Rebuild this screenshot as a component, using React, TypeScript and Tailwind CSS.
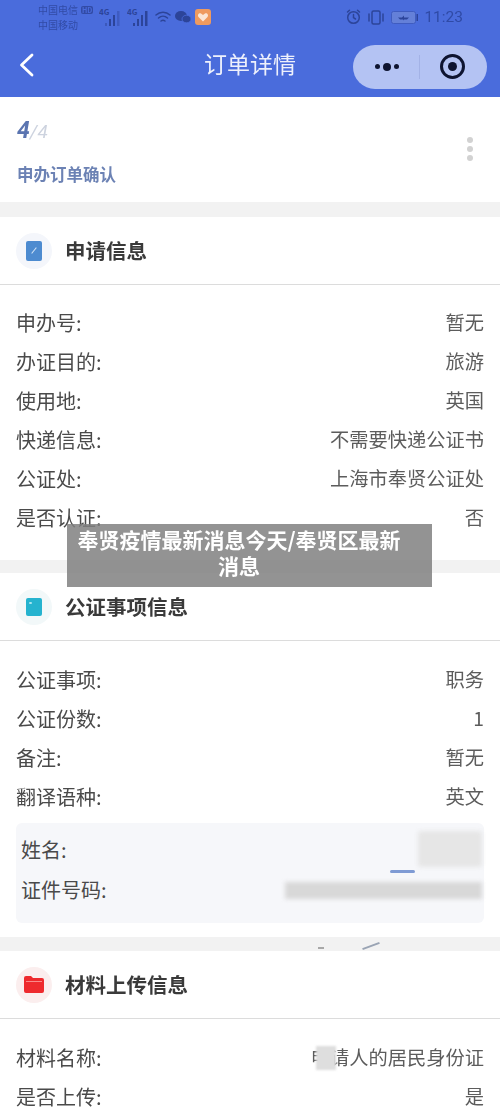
const cjk = "font-['Noto_Sans_CJK_SC','Noto_Sans',sans-serif]";

type RowProps = {
  label: string;
  value: string;
};

const Row = ({ label, value }: RowProps) => (
  <div className="flex h-[39px] items-center justify-between pl-4 pr-[16px] text-[20px] leading-[39px] text-[#4a4a4a]">
    <span>{label}</span>
    <span className="text-[19.25px] text-[#5c5c5c]">{value}</span>
  </div>
);

type HeaderProps = {
  title: string;
  halo: string;
  children: React.ReactNode;
};

const SectionHeader = ({ title, halo, children }: HeaderProps) => (
  <div className="flex h-[68px] items-center gap-[13px] border-b border-[#dcdcdc] pl-[16px]">
    <div className={`flex h-[36px] w-[36px] items-center justify-center rounded-full ${halo}`}>
      {children}
    </div>
    <span className="text-[20.5px] font-bold text-[#3a3a3a]">{title}</span>
  </div>
);

const Signal = ({ dim }: { dim?: boolean }) => (
  <svg width="24" height="22" viewBox="0 0 24 22" fill="#2c4499">
    <text x="0" y="9" fontSize="8" fontWeight="700">4G</text>
    <rect x="6" y="17" width="2" height="3" opacity={dim ? 0.5 : 1} />
    <rect x="10" y="13" width="2" height="7" />
    <rect x="14" y="9" width="2" height="11" />
    <rect x="18" y="5" width="2.500" height="15" opacity={dim ? 0.4 : 1} />
  </svg>
);

const StatusBar = () => (
  <div className="flex h-[36px] items-center pb-[2px] pl-[38px] pr-[37px] text-[#2c4499]">
    <div className="flex flex-col text-[10px] leading-[15px] opacity-80">
      <span className="flex items-center gap-[3px]">
        中国电信
        <span className="rounded-[2px] bg-[#2c4499] px-[1px] text-[7px] font-bold leading-[8px] text-[#4a6cdc]">HD</span>
      </span>
      <span>中国移动</span>
    </div>
    <div className="ml-[6px] flex items-center gap-[4px]">
      <Signal dim />
      <Signal />
      <svg width="16" height="14" viewBox="0 0 16 14" fill="none" stroke="#2c4499" strokeWidth="1.5" strokeLinecap="round">
        <path d="M1 5c4-3.6 10-3.6 14 0" />
        <path d="M3.5 8c2.6-2.2 6.400-2.200 9 0" />
        <path d="M6 11c1.200-.9 2.800-.9 4 0" />
      </svg>
      <svg width="16" height="14" viewBox="0 0 16 14" fill="#2c4499">
        <ellipse cx="6" cy="6" rx="6" ry="5" />
        <ellipse cx="11.500" cy="9" rx="4.500" ry="3.800" stroke="#4a6cdc" strokeWidth="0.8" />
      </svg>
      <svg width="16" height="16" viewBox="0 0 16 16">
        <rect width="16" height="16" rx="3" fill="#ef9a5f" />
        <path d="M8 12.500 3.500 8c-1.500-2 .5-4.500 2.500-3.500L8 6l2-1.500c2-1 4 1.500 2.500 3.500z" fill="#fbe6d6" />
      </svg>
    </div>
    <div className="ml-auto flex items-center gap-[6px]">
      <svg width="15" height="16" viewBox="0 0 15 16" fill="none" stroke="#2c4499" strokeWidth="1.500" strokeLinecap="round">
        <circle cx="7.500" cy="8.500" r="5.800" />
        <path d="M7.500 5.500v3.200l2 1.300M1.500 3 3.500 1.200M13.500 3l-2-1.800" />
      </svg>
      <svg width="18" height="15" viewBox="0 0 18 15" fill="none" stroke="#2c4499" strokeWidth="1.500" strokeLinecap="round">
        <rect x="5" y="1" width="8" height="13" rx="1.500" />
        <path d="M2 4v7M16 4v7" />
      </svg>
      <svg width="27" height="13" viewBox="0 0 27 13">
        <rect x="0.500" y="0.500" width="24" height="12" rx="2" fill="#6480d8" stroke="#3f5cc0" />
        <rect x="25.500" y="3" width="1.500" height="7" fill="#2c4499" />
        <path d="M7 6.500h4l2-2v2h5l-2 2h-3l-1 1v-1H9z" fill="#2c4499" />
      </svg>
      <span className="mt-[1px] font-['Roboto',sans-serif] text-[15.500px] leading-none text-[#2f4aa6]">11:23</span>
    </div>
  </div>
);

const NavBar = () => (
  <div className="relative flex h-[61px] items-center pl-[19px] pr-[13px]">
    <svg className="-mt-[3px]" width="15" height="24" viewBox="0 0 15 24" fill="none" stroke="white" strokeWidth="2.800" strokeLinecap="round" strokeLinejoin="round">
      <path d="M13 2 2.500 12 13 22" />
    </svg>
    <span className="absolute left-0 right-0 top-[10px] text-center text-[23px] leading-[34px] text-white/90">订单详情</span>
    <div className="ml-auto flex h-[44px] w-[134px] items-center rounded-full bg-[#b4c3f3]">
      <div className="flex w-[66px] items-center justify-center gap-[3px] pl-[2px]">
        <span className="h-[5px] w-[5px] rounded-full bg-[#0e1430]" />
        <span className="h-[8px] w-[8px] rounded-full bg-[#0e1430]" />
        <span className="h-[5px] w-[5px] rounded-full bg-[#0e1430]" />
      </div>
      <div className="h-[24px] w-px bg-[#a3b2e6]" />
      <div className="flex flex-1 items-center justify-center pr-[2px]">
        <div className="flex h-[25px] w-[25px] items-center justify-center rounded-full border-[3px] border-[#0e1430]">
          <span className="h-[9px] w-[9px] rounded-full bg-[#0e1430]" />
        </div>
      </div>
    </div>
  </div>
);

const App = () => {
  return (
    <div className={`relative h-[1111px] w-[500px] overflow-hidden bg-white ${cjk}`}>
      <div className="blur-[0.5px]">
        <div className="h-[97px] bg-[#4a6cdc]">
          <StatusBar />
          <NavBar />
        </div>

        <div className="flex h-[105px] items-center justify-between pl-[17px] pr-[27px]">
          <div className="flex flex-col pt-[2px]">
            <div className="flex items-baseline font-['Roboto',sans-serif] italic leading-[30px]">
              <span className="text-[23px] font-bold text-[#5a74b0]">4</span>
              <span className="text-[19px] text-[#cdd3df]">/4</span>
            </div>
            <span className="mt-[15px] text-[16.500px] font-bold leading-[24px] text-[#6c82b4]">申办订单确认</span>
          </div>
          <div className="-mt-[1px] flex flex-col gap-[3px]">
            <span className="h-[6px] w-[6px] rounded-full bg-[#d2d2d2]" />
            <span className="h-[6px] w-[6px] rounded-full bg-[#d2d2d2]" />
            <span className="h-[6px] w-[6px] rounded-full bg-[#d2d2d2]" />
          </div>
        </div>
        <div className="h-[15px] bg-[#f2f2f2]" />

        <SectionHeader title="申请信息" halo="bg-[#f4f6fb]">
          <svg width="16" height="20" viewBox="0 0 16 20">
            <rect width="16" height="20" rx="2" fill="#4d8bd0" />
            <path d="M6 12 10 7" stroke="#cfe2f6" strokeWidth="1.200" strokeLinecap="round" />
          </svg>
        </SectionHeader>
        <div className="h-[18px]" />
        <Row label="申办号:" value="暂无" />
        <Row label="办证目的:" value="旅游" />
        <Row label="使用地:" value="英国" />
        <Row label="快递信息:" value="不需要快递公证书" />
        <Row label="公证处:" value="上海市奉贤公证处" />
        <Row label="是否认证:" value="否" />
        <div className="h-[23px]" />
        <div className="h-[13px] bg-[#f2f2f2]" />

        <SectionHeader title="公证事项信息" halo="bg-[#f2f8f9]">
          <svg width="16" height="18" viewBox="0 0 16 18">
            <rect width="16" height="18" rx="2" fill="#25b3cf" />
            <rect x="3" y="4" width="3" height="2" rx="1" fill="#a8e4ef" />
          </svg>
        </SectionHeader>
        <div className="h-[19px]" />
        <Row label="公证事项:" value="职务" />
        <Row label="公证份数:" value="1" />
        <Row label="备注:" value="暂无" />
        <Row label="翻译语种:" value="英文" />

        <div className="relative mx-4 mt-[7px] flex h-[100px] flex-col justify-center gap-[20px] rounded-[6px] bg-[#f6f7fa] pb-[6px] pl-[5px] pr-[6px] text-[20px] leading-[20px] text-[#4a4a4a]">
          <div className="flex h-[20px] items-center justify-between">
            <span>姓名:</span>
            <div className="h-[36px] w-[64px] -translate-y-[1px] translate-x-[4px] rounded-[3px] bg-[#e6e6e6] blur-[2px]" />
          </div>
          <div className="flex h-[20px] items-center justify-between">
            <span>证件号码:</span>
            <div className="h-[17px] w-[197px] translate-x-[4px] bg-[#d8d8d8] blur-[2px]" />
          </div>
          <div className="absolute left-[374px] top-[47px] h-[3px] w-[25px] rounded-full bg-[#7f9bd4] blur-[0.5px]" />
        </div>
        <div className="h-[14px]" />
        <div className="relative h-[14px] bg-[#f2f2f2]">
          <div className="absolute left-[362px] top-[8px] h-[2px] w-[18px] -rotate-[20deg] bg-[#9aa4b4]" />
          <div className="absolute left-[318px] top-[10px] h-[2px] w-[6px] bg-[#a8a8a8]" />
        </div>

        <SectionHeader title="材料上传信息" halo="bg-[#fbeeee]">
          <svg width="20" height="17" viewBox="0 0 20 17">
            <path d="M2 0h5l2 2h9a2 2 0 0 1 2 2v11a2 2 0 0 1-2 2H2a2 2 0 0 1-2-2V2a2 2 0 0 1 2-2z" fill="#ee2a2e" />
            <rect x="2" y="5" width="16" height="1" fill="#f98a8a" />
          </svg>
        </SectionHeader>
        <div className="h-[19px]" />
        <div className="relative">
          <Row label="材料名称:" value="申请人的居民身份证" />
          <div className="absolute left-[316px] top-[8px] h-[24px] w-[20px] bg-[#dedede] blur-[1px]" />
        </div>
        <Row label="是否上传:" value="是" />
      </div>

      <div className="absolute left-[67px] top-[524px] flex h-[63px] w-[365px] items-center justify-center bg-[#808080]/85 pb-[8px] pl-[9px] pr-[30px] text-center text-[21px] font-bold leading-[26px] text-white">
        奉贤疫情最新消息今天/奉贤区最新消息
      </div>
    </div>
  );
};

export default App;
